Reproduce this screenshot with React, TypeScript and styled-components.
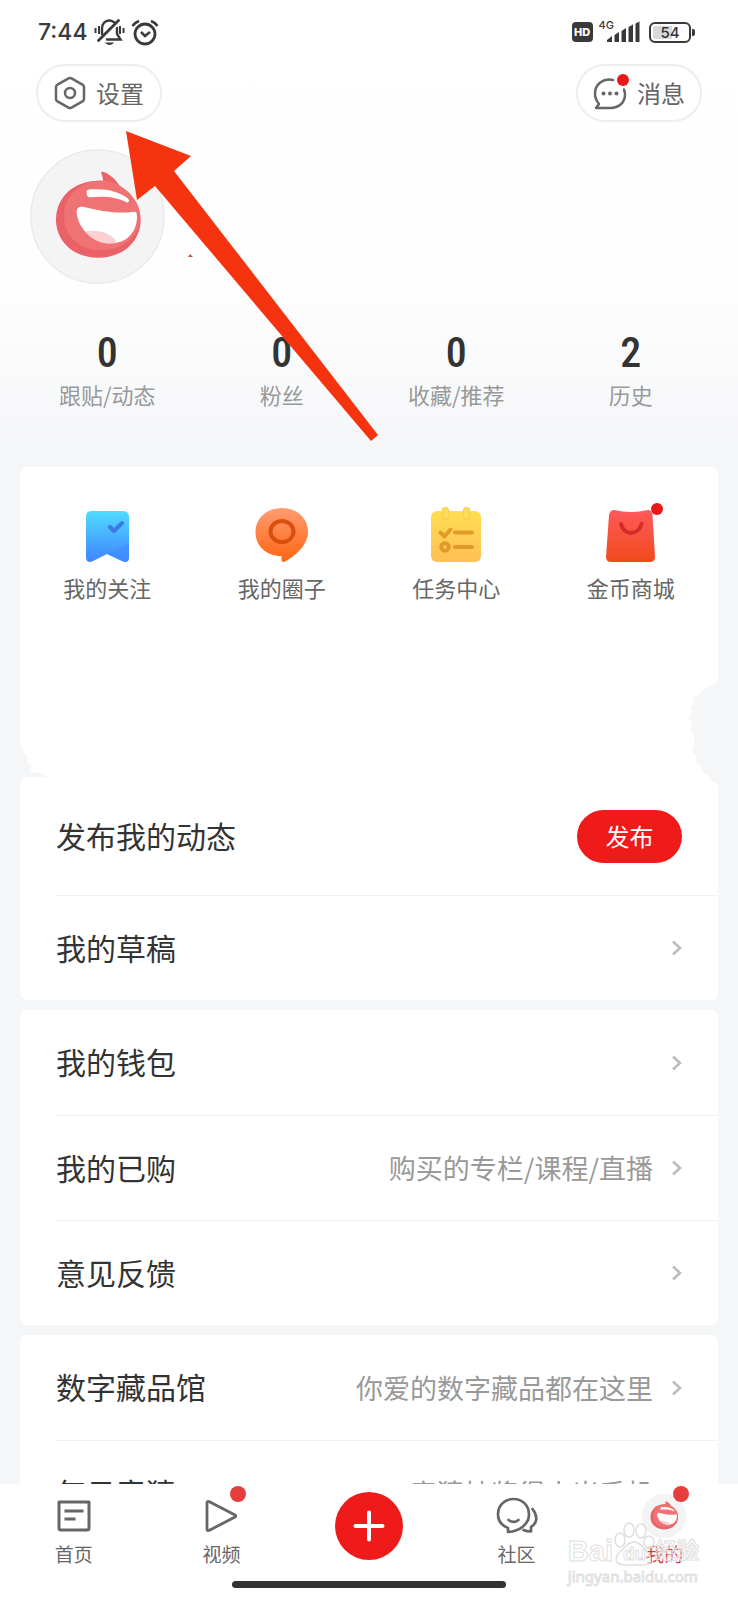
import React from "react";
import styled, { createGlobalStyle } from "styled-components";

const cjk = `"Noto Sans CJK SC", "Noto Sans", sans-serif`;

const GlobalStyle = createGlobalStyle`
  *, *::before, *::after { box-sizing: border-box; }
  body { margin: 0; background: #f5f6f8; font-family: ${cjk}; }
  button { font: inherit; border: 0; padding: 0; background: none; cursor: pointer; }
  a { color: inherit; text-decoration: none; }
  svg { display: block; flex: none; }
`;

const Screen = styled.div`
  position: relative;
  display: flex;
  flex-direction: column;
  height: 100vh;
  overflow: hidden;
  color: #333;
`;

const Scroller = styled.main`
  flex: 1;
  min-height: 0;
  overflow: hidden;
`;

const Header = styled.header`
  background: linear-gradient(#fff 0, #fefefe 280px, #f5f6f8 450px);
  padding-bottom: 58px;
`;

const StatusBar = styled.div`
  display: flex;
  align-items: center;
  height: 64px;
  padding: 0 47px 0 38px;
`;

const StatusGroup = styled.div<{ $gap: number; $end?: boolean }>`
  display: flex;
  align-items: center;
  gap: ${(p) => p.$gap}px;
  margin-left: ${(p) => (p.$end ? "auto" : 0)};
`;

const Clock = styled.span`
  font: 500 23px/28px Inter, sans-serif;
  color: #3a3a3a;
`;

const HdBadge = styled.span`
  width: 21px;
  height: 20px;
  border-radius: 4px;
  background: #3a3a3a;
  color: #fff;
  font: 800 11px/20px Inter, sans-serif;
  text-align: center;
`;

const Signal = styled.span`
  display: flex;
  align-items: flex-start;
`;

const Network = styled.span`
  font: 500 11px/12px Inter, sans-serif;
  color: #3a3a3a;
  margin: -2px -7px 0 0;
`;

const Battery = styled.span`
  position: relative;
  width: 42px;
  height: 21px;
  border: 2px solid #3a3a3a;
  border-radius: 6px;
  background: linear-gradient(90deg, #d9d9d9 54%, #fff 54%);
  box-shadow: inset 0 0 0 2px #fff;
  font: 500 15px/17px Inter, sans-serif;
  text-align: center;
  margin-left: 3px;

  &::after {
    content: "";
    position: absolute;
    right: -6px;
    top: 5px;
    width: 3px;
    height: 7px;
    border-radius: 0 2px 2px 0;
    background: #3a3a3a;
  }
`;

const Actions = styled.div`
  display: flex;
  justify-content: space-between;
  padding: 0 36px;
`;

const PillButton = styled.button<{ $gap: number }>`
  display: flex;
  align-items: center;
  justify-content: center;
  gap: ${(p) => p.$gap}px;
  width: 126px;
  height: 58px;
  border: 2px solid #eee;
  border-radius: 29px;
  background: #fff;
  color: #666;
  font-size: 24px;
  line-height: 32px;
`;

const Avatar = styled.a`
  display: block;
  width: 135px;
  margin: 27px 30px 49px;
`;

const Quarters = styled.div`
  display: grid;
  grid-template-columns: repeat(4, 1fr);
`;

const Stats = styled(Quarters)`
  padding: 0 20px;
`;

const Stat = styled.a`
  display: flex;
  flex-direction: column;
  align-items: center;
  gap: 6px;
`;

const StatValue = styled.span`
  font: 500 42px/40px "Roboto Condensed", "Liberation Sans Narrow", Roboto, sans-serif;
`;

const StatLabel = styled.span`
  font-size: 22px;
  line-height: 30px;
  color: #999;
`;

const Card = styled.section`
  position: relative;
  margin: 0 20px 10px;
  border-radius: 7px;
  background: #fff;
`;

const ToolCard = styled(Card)`
  padding: 40px 0 175px;
  margin-bottom: 0;
`;

const Tool = styled.a`
  display: flex;
  flex-direction: column;
  align-items: center;
  gap: 9px;
  font-size: 22px;
  line-height: 30px;
  color: #666;
`;

const Notch = styled.svg<{ $side: "left" | "right" }>`
  position: absolute;
  ${(p) => (p.$side === "left" ? "left: 0; bottom: 0;" : "right: 0; top: -97px;")}
`;

const Row = styled.div<{ $height: number }>`
  display: flex;
  align-items: center;
  height: ${(p) => p.$height}px;
  margin-left: 36px;
  padding-right: 36px;
  & + & {
    border-top: 1px solid #eef0f1;
  }
`;

const RowTitle = styled.span`
  flex: 1;
  padding-bottom: 3px;
  font-size: 30px;
  line-height: 40px;
`;

const RowNote = styled.span`
  font-size: 27px;
  line-height: 36px;
  color: #999;
  margin-right: 19px;
`;

const PublishButton = styled.button`
  width: 105px;
  height: 53px;
  border-radius: 27px;
  background: #ef1a1a;
  color: #fff;
  font-size: 24px;
  line-height: 32px;
`;

const TabBar = styled.nav`
  display: grid;
  grid-template-columns: repeat(5, 1fr);
  justify-items: center;
  align-items: start;
  padding-top: 8px;
  background: #fff;
`;

const Tab = styled.a<{ $active?: boolean }>`
  display: flex;
  flex-direction: column;
  align-items: center;
  gap: 4px;
  padding: 2px 0 1px;
  font-size: 19px;
  line-height: 24px;
  color: ${(p) => (p.$active ? "#d63c40" : "#666")};
`;

const TabIcon = styled.span`
  position: relative;
  display: flex;
  align-items: center;
  justify-content: center;
  width: 44px;
  height: 44px;
`;

const TabDot = styled.i`
  position: absolute;
  top: -8px;
  right: -3px;
  width: 16px;
  height: 16px;
  border-radius: 50%;
  background: #e53e3c;
`;

const AddButton = styled.button`
  display: flex;
  align-items: center;
  justify-content: center;
  width: 68px;
  height: 68px;
  border-radius: 50%;
  background: #ef1a1a;
`;

const HomeIndicator = styled.div`
  background: #fff;
  padding: 14px 0 12px;
  &::after {
    content: "";
    display: block;
    width: 37%;
    height: 7px;
    margin: 0 auto;
    border-radius: 4px;
    background: #333;
  }
`;

const Pointer = styled.svg`
  position: absolute;
  top: 131px;
  left: 126px;
  pointer-events: none;
`;

const Watermark = styled.div`
  position: absolute;
  right: 39px;
  bottom: 14px;
  pointer-events: none;
  color: rgba(255, 255, 255, 0.4);
  -webkit-text-stroke: 1px #dfdfdf;
`;

const WatermarkBrand = styled.div`
  display: flex;
  align-items: flex-end;
  height: 46px;
  font: 700 29px/30px "Liberation Sans", ${cjk};
`;

const WatermarkPaw = styled.span`
  position: relative;
  span {
    position: absolute;
    left: 10px;
    bottom: 0;
    font-size: 19px;
    line-height: 24px;
  }
`;

const WatermarkCjk = styled.span`
  font-size: 22px;
`;

const WatermarkUrl = styled.div`
  font: 400 15px/20px "Noto Sans", sans-serif;
`;

const Face = ({ size }: { size: number | string }) => (
  <svg width={size} viewBox="0 0 405 405" aria-hidden="true">
    <circle cx="202.500" cy="202.500" r="200" fill="#f4f4f4" stroke="#e8e8e8" strokeWidth="4" />
    <path d="M213 70C216 67 220 68 224 70C248 82 262 98 273 118L304 146L222 134C222 112 221 90 213 70Z" fill="#ea6368" />
    <path d="M205 95C262 95 331 138 332 211C332 280 277 326 205 326C132 326 78 280 78 211C78 145 132 95 205 95Z" fill="#ea6167" />
    <path d="M222 95C270 98 328 142 330 205C330 262 280 304 214 304C150 304 102 262 102 200C102 138 160 90 222 95Z" fill="#ef7374" />
    <path d="M170 131C168 124 174 121 184 121C230 118 268 128 293 148C299 153 298 160 292 161C262 144 222 140 182 145C171 146 171 138 170 131Z" fill="#fff" />
    <path d="M140 192C138 176 150 171 162 174C205 185 262 195 308 189C319 187 321 192 321 201C322 246 292 283 244 283C190 284 145 240 140 192Z" fill="#fff" />
    <path d="M165 248C200 240 242 250 261 280C225 290 190 276 165 248Z" fill="#fbd0d0" />
  </svg>
);

const MutedBell = () => (
  <svg width="31" height="27" viewBox="0 0 31 27" fill="none" stroke="#3a3a3a" strokeWidth="2.400" strokeLinecap="round">
    <path d="M1.500 9v5M5 7v8M29.500 9v5M26 7v8" strokeLinecap="butt" strokeWidth="2" />
    <path d="M8 15V9.500C8 5 11 1.500 15 1.500C17 1.500 18.500 2 20 3.200M23 9v6l3.500 5.500H13" />
    <path d="M24.500 1.500L4.500 21.500" strokeWidth="2.800" />
    <path d="M11 23.500h9c-2 3.300-7 3.300-9 0z" fill="#3a3a3a" stroke="none" />
  </svg>
);

const Alarm = () => (
  <svg width="28" height="27" viewBox="0 0 28 27" fill="none" stroke="#3a3a3a" strokeWidth="2.800">
    <circle cx="14" cy="15" r="10" />
    <path d="M10 13l4 4 5-4" strokeWidth="2.500" />
    <path d="M1.500 7Q4 3.500 8 2M26.500 7Q24 3.500 20 2" />
  </svg>
);

const Bars = () => (
  <svg width="33" height="22" viewBox="0 0 33 22" fill="#3a3a3a">
    <path d="M0 21v-2l5-4v6zM7.500 21v-7l4.500-3v10zM14.500 21V10l4.500-3v14zM21.500 21V6l4.500-2.500V21zM28.500 21V2.500l4-2V21z" />
  </svg>
);

const Settings = () => (
  <svg width="32" height="34" viewBox="0 0 32 34" fill="none" stroke="#666" strokeWidth="2.500" strokeLinejoin="round">
    <path d="M14.500 2.400Q16 1.500 17.500 2.400L28.500 8.700Q30 9.500 30 11v12Q30 24.500 28.500 25.400L17.500 31.600Q16 32.500 14.500 31.600L3.500 25.400Q2 24.500 2 23V11Q2 9.500 3.500 8.700Z" />
    <circle cx="16" cy="17" r="5" />
  </svg>
);

const Messages = () => (
  <svg width="36" height="38" viewBox="0 0 36 38" fill="none" stroke="#666" strokeWidth="2.500" strokeLinecap="round" strokeLinejoin="round">
    <path d="M20 6C10 4 2 10 2 19.500C2 24 3.500 27 6 30L3 34H17C26 34 32 28.500 32 20.500C32 18.500 31.500 17 31 15.500" />
    <g fill="#666" stroke="none">
      <circle cx="10.500" cy="19.500" r="2" />
      <circle cx="17" cy="19.500" r="2" />
      <circle cx="23.500" cy="19.500" r="2" />
    </g>
    <circle cx="30" cy="6" r="6" fill="#ea1818" stroke="none" />
  </svg>
);

const FollowIcon = () => (
  <svg width="56" height="56" viewBox="0 0 56 56">
    <defs>
      <linearGradient id="follow" x2="0" y2="1">
        <stop stopColor="#4fdcff" />
        <stop offset="1" stopColor="#4084ff" />
      </linearGradient>
    </defs>
    <path d="M12 4h32q6 0 6 6v40q0 7-7 4L28 47L14 54q-7 3-7-4V10q0-6 5-6z" fill="url(#follow)" />
    <path d="M50 36L28 47L43 54q7 3 7-4z" fill="#3f8cff" opacity=".6" />
    <path d="M31 20l4 4 8-8" fill="none" stroke="#3b78e8" strokeWidth="4" strokeLinecap="round" strokeLinejoin="round" />
  </svg>
);

const CircleIcon = () => (
  <svg width="56" height="56" viewBox="0 0 56 56">
    <defs>
      <linearGradient id="circle" x2="0" y2="1">
        <stop stopColor="#ff9d72" />
        <stop offset="1" stopColor="#ff6410" />
      </linearGradient>
    </defs>
    <path d="M28 1C43 1 54 11 54 25C54 37 43 48 31 54.500Q28 56 27.500 53V49C12 49 1.500 39 1.500 25C1.500 11 13 1 28 1Z" fill="url(#circle)" />
    <ellipse cx="28" cy="24.500" rx="11.500" ry="10.500" fill="none" stroke="#d9500c" strokeWidth="4" />
  </svg>
);

const TaskIcon = () => (
  <svg width="56" height="56" viewBox="0 0 56 56" overflow="visible">
    <defs>
      <linearGradient id="task" x2="0" y2="1">
        <stop stopColor="#ffdf4f" />
        <stop offset="1" stopColor="#ffbf55" />
      </linearGradient>
    </defs>
    <rect x="3" y="4" width="50" height="51" rx="6" fill="url(#task)" />
    <path d="M17.500 3.500v6M38.500 3.500v6" stroke="#fbcb48" strokeWidth="7" strokeLinecap="round" />
    <path d="M17.500 3.500v6M38.500 3.500v6" stroke="#ffdc5a" strokeWidth="5" strokeLinecap="round" />
    <g fill="none" stroke="#e39a2d" strokeWidth="4" strokeLinecap="round" strokeLinejoin="round">
      <path d="M12.500 25.500l4 4 6-7M27 25.500h17M27 40h17" />
      <circle cx="17" cy="40" r="3.800" />
    </g>
  </svg>
);

const MallIcon = () => (
  <svg width="56" height="56" viewBox="0 0 56 56" overflow="visible">
    <defs>
      <linearGradient id="mall" x2="0" y2="1">
        <stop stopColor="#ff5a5a" />
        <stop offset="1" stopColor="#f04a1c" />
      </linearGradient>
    </defs>
    <path d="M11 3q17 4 34 0q4 0 4.500 5L52 50q0 5-5 5H8q-5 0-5-5L6 8q1-5 5-5z" fill="url(#mall)" />
    <path d="M18 17c3 12 17 12 20.500 0" fill="none" stroke="#d52b2b" strokeWidth="4" strokeLinecap="round" />
    <circle cx="54" cy="2" r="6" fill="#ea1818" />
  </svg>
);

const Chevron = () => (
  <svg width="10" height="16" viewBox="0 0 10 16" fill="none" stroke="#bcbcbc" strokeWidth="2.500">
    <path d="M1 1.500L8 8L1 14.500" />
  </svg>
);

const HomeIcon = () => (
  <svg width="34" height="32" viewBox="0 0 34 32" fill="none" stroke="#666" strokeWidth="3">
    <path d="M2 2h30v26q0 2-2 2H4q-2 0-2-2z" strokeLinejoin="round" />
    <path d="M7.500 11h19M7.500 19h11" />
  </svg>
);

const VideoIcon = () => (
  <svg width="34" height="34" viewBox="0 0 34 34" fill="none" stroke="#666" strokeWidth="2.800">
    <path d="M3 4v26q0 2 2 1.500L31 18q1.500-1 0-2L5 2.500Q3 2 3 4z" strokeLinejoin="round" />
  </svg>
);

const PlusIcon = () => (
  <svg width="32" height="32" viewBox="0 0 32 32" stroke="#fff" strokeWidth="4" strokeLinecap="round">
    <path d="M16 2.500v27M2.500 16h27" />
  </svg>
);

const CommunityIcon = () => (
  <svg width="42" height="38" viewBox="0 0 42 38" fill="none" stroke="#666" strokeWidth="2.700" strokeLinecap="round" strokeLinejoin="round">
    <path d="M12 35V31C6 28.500 2 24 2 17.500C2 8.500 8.500 2 17.500 2S33 8.500 33 17.500C33 27 24 34 12 35Z" />
    <path d="M12.500 23c3.500 2.500 7 2.500 10 0" />
    <path d="M36.500 12C42 19 41.500 26 35 30V34.500C32 34.500 29.500 34 27.500 33" />
  </svg>
);

const Paw = () => (
  <svg width="42" height="44" viewBox="0 0 42 44" fill="#fff" fillOpacity=".4" stroke="#dfdfdf" strokeWidth="1.500">
    <ellipse cx="7" cy="18" rx="5" ry="7" />
    <ellipse cx="16" cy="8" rx="5" ry="7" />
    <ellipse cx="28" cy="9" rx="5" ry="7" />
    <ellipse cx="36" cy="20" rx="5" ry="6" />
    <path d="M13 24q8-8 16 0l7 8q5 11-6 11H12Q-1 42 5 32z" />
  </svg>
);

const stats = [
  { value: 0, label: "跟贴/动态" },
  { value: 0, label: "粉丝" },
  { value: 0, label: "收藏/推荐" },
  { value: 2, label: "历史" },
];

const tools = [
  { icon: <FollowIcon />, label: "我的关注" },
  { icon: <CircleIcon />, label: "我的圈子" },
  { icon: <TaskIcon />, label: "任务中心" },
  { icon: <MallIcon />, label: "金币商城" },
];

const LinkRow = ({ title, note }: { title: string; note?: string }) => (
  <Row as="a" href="#" $height={105}>
    <RowTitle>{title}</RowTitle>
    {note && <RowNote>{note}</RowNote>}
    <Chevron />
  </Row>
);

export default function App() {
  return (
    <Screen>
      <GlobalStyle />
      <Scroller>
        <Header>
          <StatusBar>
            <StatusGroup $gap={6}>
              <Clock>7:44</Clock>
              <MutedBell />
              <Alarm />
            </StatusGroup>
            <StatusGroup $gap={6} $end>
              <HdBadge>HD</HdBadge>
              <Signal>
                <Network>4G</Network>
                <Bars />
              </Signal>
              <Battery>54</Battery>
            </StatusGroup>
          </StatusBar>
          <Actions>
            <PillButton $gap={10}>
              <Settings />
              设置
            </PillButton>
            <PillButton $gap={8}>
              <Messages />
              消息
            </PillButton>
          </Actions>
          <Avatar href="#" aria-label="头像">
            <Face size="135" />
          </Avatar>
          <Stats>
            {stats.map((s) => (
              <Stat href="#" key={s.label}>
                <StatValue>{s.value}</StatValue>
                <StatLabel>{s.label}</StatLabel>
              </Stat>
            ))}
          </Stats>
        </Header>

        <ToolCard>
          <Quarters>
            {tools.map((t) => (
              <Tool href="#" key={t.label}>
                {t.icon}
                {t.label}
              </Tool>
            ))}
          </Quarters>
          <Notch $side="left" width="26" height="32" viewBox="0 0 26 32" fill="#f5f6f8">
            <path d="M0 0L3 2V8L7 9V17L11 20V27Q20 27 26 32H0Z" />
          </Notch>
        </ToolCard>

        <Card>
          <Row $height={118}>
            <RowTitle>发布我的动态</RowTitle>
            <PublishButton>发布</PublishButton>
          </Row>
          <LinkRow title="我的草稿" />
          <Notch $side="right" width="30" height="105" viewBox="0 0 30 105" fill="#f5f6f8">
            <path d="M30 0L26 4L18 8L13 13L5 18L7 22L2 27L5 33L0 38L4 44L3 50L6 54V66L4 71L8 76L7 82L13 86L14 92L20 95L24 101L30 105Z" />
          </Notch>
        </Card>

        <Card>
          <LinkRow title="我的钱包" />
          <LinkRow title="我的已购" note="购买的专栏/课程/直播" />
          <LinkRow title="意见反馈" />
        </Card>

        <Card>
          <LinkRow title="数字藏品馆" note="你爱的数字藏品都在这里" />
          <LinkRow title="每日竞猜" note="竞猜抽奖得小米手机" />
        </Card>
      </Scroller>

      <TabBar>
        <Tab href="#">
          <TabIcon>
            <HomeIcon />
          </TabIcon>
          首页
        </Tab>
        <Tab href="#">
          <TabIcon>
            <VideoIcon />
            <TabDot />
          </TabIcon>
          视频
        </Tab>
        <AddButton aria-label="发布">
          <PlusIcon />
        </AddButton>
        <Tab href="#">
          <TabIcon>
            <CommunityIcon />
          </TabIcon>
          社区
        </Tab>
        <Tab href="#" $active>
          <TabIcon>
            <Face size="44" />
            <TabDot />
          </TabIcon>
          我的
        </Tab>
      </TabBar>
      <HomeIndicator />

      <Pointer width="254" height="312" viewBox="0 0 254 312" fill="#f5340f" aria-hidden="true">
        <path d="M0 0L65 25L48 40L252 304L245 310L29 55L11 69Z" />
        <path d="M62 126l2-3 3 3z" fill="#c9543f" />
      </Pointer>

      <Watermark>
        <WatermarkBrand>
          Bai
          <WatermarkPaw>
            <Paw />
            <span>du</span>
          </WatermarkPaw>
          <WatermarkCjk>经验</WatermarkCjk>
        </WatermarkBrand>
        <WatermarkUrl>jingyan.baidu.com</WatermarkUrl>
      </Watermark>
    </Screen>
  );
}
